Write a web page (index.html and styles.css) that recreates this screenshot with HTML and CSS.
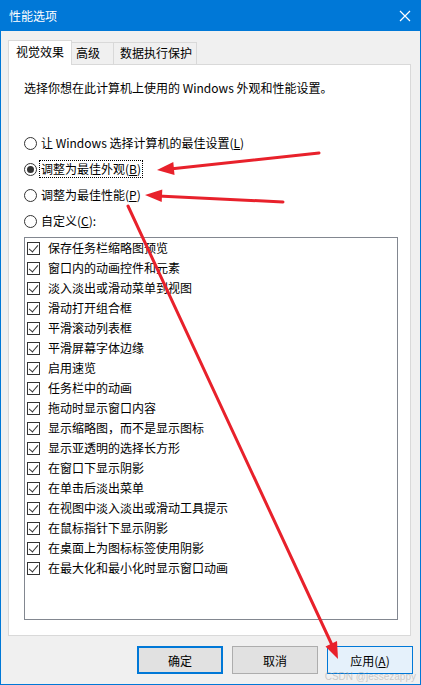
FILE: index.html
```html
<!DOCTYPE html>
<html lang="zh-CN">
<head>
<meta charset="utf-8">
<title>性能选项</title>
<link rel="stylesheet" href="styles.css">
</head>
<body>
<div class="window">
  <div class="titlebar">
    <span class="title">性能选项</span>
    <svg class="close" width="12" height="12" viewBox="0 0 12 12"><path d="M1 1 L11 11 M11 1 L1 11" stroke="#fff" stroke-width="1.2" fill="none"/></svg>
  </div>
  <div class="body">
    <div class="tabs">
      <div class="tab active">视觉效果</div>
      <div class="tab">高级</div>
      <div class="tab">数据执行保护</div>
    </div>
    <div class="panel">
      <p class="desc">选择你想在此计算机上使用的 Windows 外观和性能设置。</p>
      <div class="radios">
        <div class="radio-row"><span class="radio"></span><span class="rlabel">让 Windows 选择计算机的最佳设置(<u>L</u>)</span></div>
        <div class="radio-row"><span class="radio checked"></span><span class="rlabel focus">调整为最佳外观(<u>B</u>)</span></div>
        <div class="radio-row"><span class="radio"></span><span class="rlabel">调整为最佳性能(<u>P</u>)</span></div>
        <div class="radio-row"><span class="radio"></span><span class="rlabel">自定义(<u>C</u>):</span></div>
      </div>
      <div class="listbox">
        <div class="item"><span class="cb"></span>保存任务栏缩略图预览</div>
        <div class="item"><span class="cb"></span>窗口内的动画控件和元素</div>
        <div class="item"><span class="cb"></span>淡入淡出或滑动菜单到视图</div>
        <div class="item"><span class="cb"></span>滑动打开组合框</div>
        <div class="item"><span class="cb"></span>平滑滚动列表框</div>
        <div class="item"><span class="cb"></span>平滑屏幕字体边缘</div>
        <div class="item"><span class="cb"></span>启用速览</div>
        <div class="item"><span class="cb"></span>任务栏中的动画</div>
        <div class="item"><span class="cb"></span>拖动时显示窗口内容</div>
        <div class="item"><span class="cb"></span>显示缩略图，而不是显示图标</div>
        <div class="item"><span class="cb"></span>显示亚透明的选择长方形</div>
        <div class="item"><span class="cb"></span>在窗口下显示阴影</div>
        <div class="item"><span class="cb"></span>在单击后淡出菜单</div>
        <div class="item"><span class="cb"></span>在视图中淡入淡出或滑动工具提示</div>
        <div class="item"><span class="cb"></span>在鼠标指针下显示阴影</div>
        <div class="item"><span class="cb"></span>在桌面上为图标标签使用阴影</div>
        <div class="item"><span class="cb"></span>在最大化和最小化时显示窗口动画</div>
      </div>
    </div>
    <div class="buttons">
      <button class="btn default">确定</button>
      <button class="btn">取消</button>
      <button class="btn hover">应用(<u>A</u>)</button>
    </div>
  </div>
  <span class="watermark">CSDN @jessezappy</span>
  <svg class="arrows" width="421" height="685" viewBox="0 0 421 685">
    <g stroke="#e8212b" stroke-width="3" stroke-linecap="round" fill="#e8212b">
      <line x1="319" y1="153" x2="170" y2="169"/>
      <line x1="283" y1="202" x2="158" y2="196"/>
      <line x1="128" y1="206" x2="332" y2="645"/>
    </g>
    <g fill="#e8212b">
      <polygon points="157,170 174.5,175 173.3,162"/>
      <polygon points="145,195 162.3,189.5 161.7,202"/>
      <polygon points="338,659 325.5,646.5 337,641"/>
    </g>
  </svg>
</div>
</body>
</html>
```
FILE: styles.css
```css
* { box-sizing: border-box; }
html, body { margin: 0; padding: 0; }
body {
  width: 421px;
  height: 685px;
  overflow: hidden;
  font-family: "Noto Sans CJK SC", "Noto Sans", sans-serif;
  font-size: 12px;
  color: #000;
  background: #fff;
}
.window {
  position: relative;
  width: 421px;
  height: 685px;
  background: #f0f0f0;
  border: 1px solid #0078d7;
  border-top: 0;
  display: flex;
  flex-direction: column;
}
.titlebar {
  height: 31px;
  background: #0078d7;
  display: flex;
  align-items: center;
  justify-content: space-between;
  padding: 0 9px 0 9px;
  color: #fff;
  margin: 0 -1px;
}
.title { font-size: 12px; line-height: 16px; }
.close { display: block; margin-right: 1px; }
.body {
  flex: 1;
  display: flex;
  flex-direction: column;
  padding: 9px 9px 0 7px;
}
.tabs {
  display: flex;
  align-items: flex-end;
  height: 24px;
  position: relative;
  z-index: 1;
}
.tab {
  height: 22px;
  line-height: 20px;
  padding: 0 7px;
  border: 1px solid #d9d9d9;
  border-bottom: 0;
  background: #f0f0f0;
  margin-left: -1px;
  color: #000;
}
.tab.active {
  height: 25px;
  margin-bottom: -1px;
  background: #fff;
  margin-left: 0;
  padding: 1px 7px 0 7px;
  line-height: 20px;
}
.tab:nth-child(2) { padding: 0 13px 0 4px; }
.tab:nth-child(3) { padding: 0 4px 0 6px; }
.panel {
  height: 572px;
  background: #fff;
  border: 1px solid #d9d9d9;
  padding: 15px 0 0 15px;
  display: flex;
  flex-direction: column;
}
.desc {
  margin: 0;
  line-height: 16px;
}
.radios {
  margin-top: 38px;
  display: flex;
  flex-direction: column;
  gap: 8px;
}
.radio-row {
  display: flex;
  align-items: center;
  height: 18px;
}
.radio {
  flex-shrink: 0;
  width: 13px;
  height: 13px;
  border: 1px solid #333;
  border-radius: 50%;
  background: #fff;
  margin-right: 3px;
  display: flex;
  align-items: center;
  justify-content: center;
}
.radio.checked::after {
  content: "";
  width: 7px;
  height: 7px;
  border-radius: 50%;
  background: #333;
}
.rlabel { line-height: 16px; padding: 0 1px; }
.rlabel.focus { outline: 1px dotted #000; outline-offset: 0; }
.listbox {
  margin-top: 7px;
  width: 374px;
  height: 383px;
  border: 1px solid #828790;
  display: flex;
  flex-direction: column;
}
.item {
  height: 20px;
  display: flex;
  align-items: center;
  padding-left: 2px;
  line-height: 16px;
}
.cb {
  flex-shrink: 0;
  width: 13px;
  height: 13px;
  border: 1px solid #333;
  background: #fff;
  margin-right: 8px;
  position: relative;
}
.cb::after {
  content: "";
  position: absolute;
  left: 3px;
  top: 0px;
  width: 4px;
  height: 8px;
  border: solid #333;
  border-width: 0 1px 1px 0;
  transform: rotate(40deg);
}
.buttons {
  display: flex;
  justify-content: flex-end;
  gap: 9px;
  margin-top: 10px;
  margin-right: -2px;
}
.btn {
  width: 86px;
  height: 28px;
  font-family: inherit;
  font-size: 12px;
  color: #000;
  background: #e1e1e1;
  border: 1px solid #adadad;
  padding: 0;
  border-radius: 0;
}
.btn.default { border: 2px solid #0078d7; }
.btn.hover { background: #e5f1fb; border-color: #0078d7; }
.watermark {
  position: absolute;
  right: 4px;
  bottom: 1px;
  font-family: "Liberation Sans", sans-serif;
  font-size: 10px;
  color: rgba(160, 160, 160, 0.5);
  line-height: 12px;
}
.arrows {
  position: absolute;
  left: -1px;
  top: 0;
  pointer-events: none;
}
```
